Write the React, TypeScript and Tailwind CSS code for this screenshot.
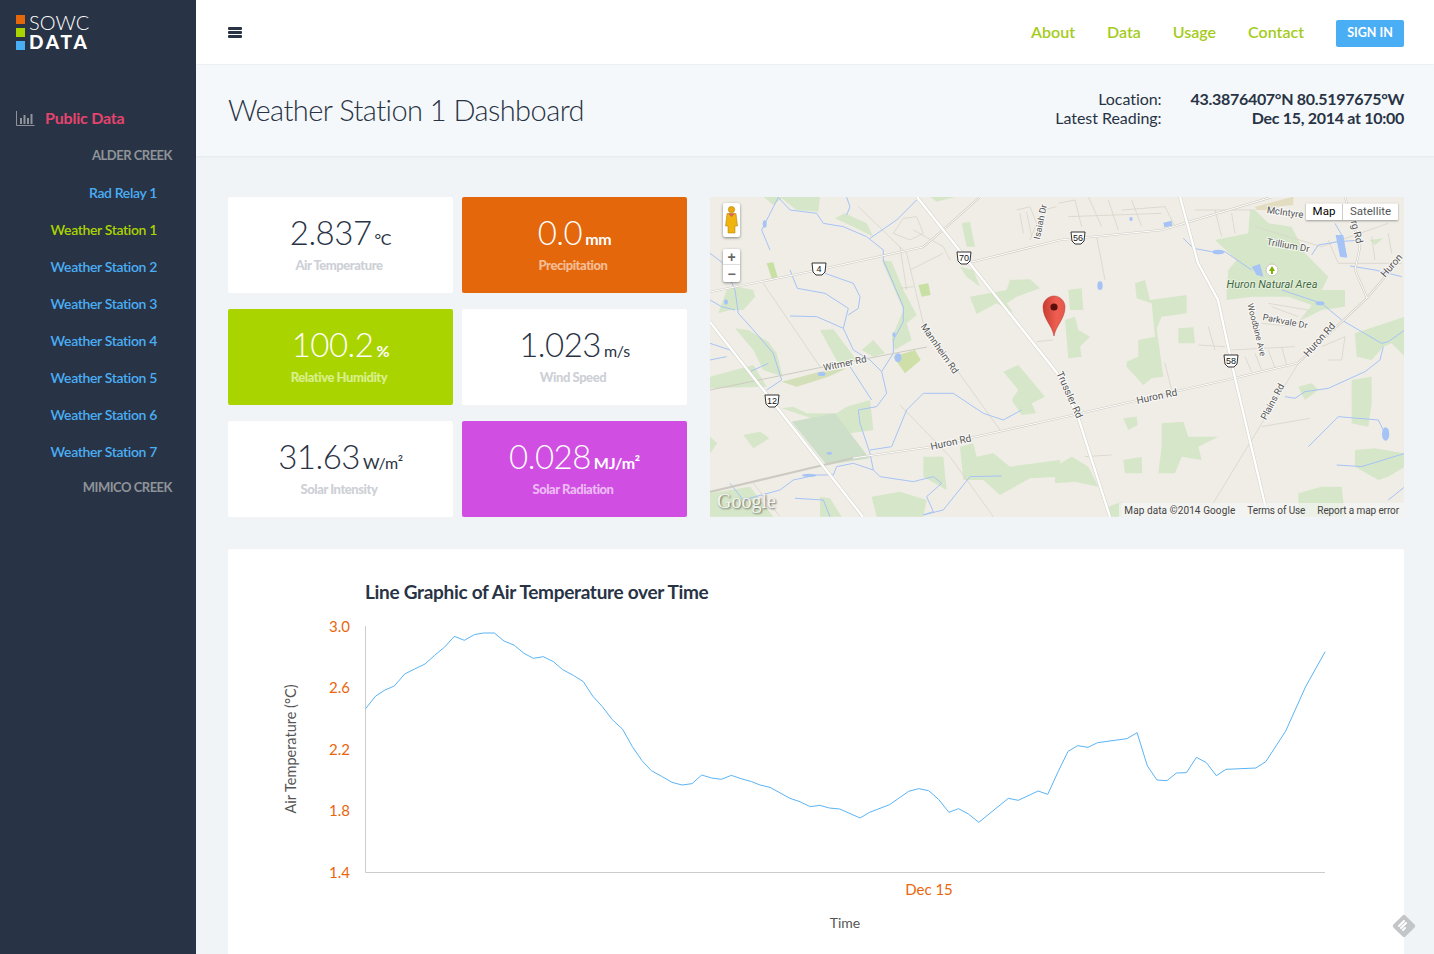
const stations = [
    "Rad Relay 1",
    "Weather Station 1",
    "Weather Station 2",
    "Weather Station 3",
    "Weather Station 4",
    "Weather Station 5",
    "Weather Station 6",
    "Weather Station 7",
];

const readings = [
    { value: "2.837", unit: "°C", label: "Air Temperature", box: "bg-white text-[#283345]", labelColor: "text-[#cdd0d6]", unitWeight: "font-normal" },
    { value: "0.0", unit: "mm", label: "Precipitation", box: "bg-[#e4670c] text-white", labelColor: "text-[#f5bd94]", unitWeight: "font-bold" },
    { value: "100.2", unit: "%", label: "Relative Humidity", box: "bg-[#aad400] text-white", labelColor: "text-[#d9f08c]", unitWeight: "font-bold" },
    { value: "1.023", unit: "m/s", label: "Wind Speed", box: "bg-white text-[#283345]", labelColor: "text-[#cdd0d6]", unitWeight: "font-normal" },
    { value: "31.63", unit: "W/m²", label: "Solar Intensity", box: "bg-white text-[#283345]", labelColor: "text-[#cdd0d6]", unitWeight: "font-normal" },
    { value: "0.028", unit: "MJ/m²", label: "Solar Radiation", box: "bg-[#d04fe2] text-white", labelColor: "text-[#eebaf5]", unitWeight: "font-bold" },
];

// traced from the reference, split in two runs
const lineLeft = [[287,416],[317,378],[345,360],[373,348],[404,312],[434,297],[465,282],[494,256],[524,231],[553,199],[583,211],[613,194],[640,189],[673,189],[702,213],[733,226],[762,250],[790,265],[820,260],[850,275],[878,299],[910,316],[940,335],[968,378],[997,410],[1027,449],[1058,478],[1087,530],[1116,572],[1144,602],[1175,619],[1206,637],[1236,645],[1266,641],[1295,615],[1325,624],[1354,628],[1384,616],[1413,626],[1445,635],[1470,645],[1500,652]];
const lineRight = [[52,685],[78,695],[105,710],[130,706],[155,714],[182,717],[235,744],[260,727],[312,704],[362,664],[388,656],[414,662],[440,688],[467,727],[492,716],[518,732],[545,757],[622,685],[648,691],[700,663],[725,673],[752,605],[778,544],[803,527],[830,532],[855,518],[932,506],[958,488],[985,588],[1010,630],[1036,632],[1061,609],[1087,608],[1113,562],[1139,578],[1165,617],[1190,598],[1268,594],[1294,575],[1346,483],[1398,350],[1449,245]];
const linePoints = [
    ...lineLeft.map(([x, y]) => `${270 + x / 3},${570 + y / 3}`),
    ...lineRight.map(([x, y]) => `${770 + x / 2.61},${570 + y / 3}`),
].join(" ");

const greensA = [
    "M160,20L330,20L325,65L260,60L215,25L190,45Z",
    "M375,85L405,70L470,100L490,140L430,110Z",
    "M515,210L545,215L580,300L620,375L590,400L605,450L555,480L545,445L580,360Z",
    "M780,320L890,300L900,270L960,268L990,295L920,320L890,340L910,370L860,340L800,372Z",
    "M750,230L790,240L810,290L770,260Z",
    "M25,370L50,300L80,290L130,300L135,320L100,360L60,360Z",
    "M330,420L370,418L440,510L385,520Z",
    "M455,480L490,450L525,490L490,500Z",
    "M75,415L115,420L175,455L200,490L218,560L160,540L130,480Z",
    "M0,560L130,525L170,590L0,595Z",
    "M215,655L250,650L290,670L380,670L410,650L480,630L490,720L420,730L350,700Z",
    "M100,735L150,725L178,745L130,775Z",
    "M0,740L22,760L0,790Z",
    "M640,800L700,800L710,900L640,860Z",
    "M750,770L790,760L800,800L850,790L900,830L1050,810L1050,860L960,865L870,915L820,870L760,870Z",
    "M880,545L925,525L1005,620L965,640L978,670L935,675L905,630L925,600Z",
    "M485,920L570,905L650,930L640,980L500,980Z",
    "M0,910L120,890L190,980L0,980Z",
    "M330,920L360,925L395,980L330,980Z",
    "M660,20L740,20L680,35Z",
    "M755,100L780,95L795,170L770,170Z",
];
const greensB = [
    "M480,150L580,130L585,60L600,60L640,100L710,110L750,190L820,260L800,300L870,300L870,350L800,360L740,390L770,345L700,320L650,320L590,320L515,330L515,300L520,240L545,210Z",
    "M40,300L80,295L85,360L45,360Z",
    "M240,280L270,270L285,330L395,315L395,370L320,380L305,415L325,560L290,565L265,585L215,530L215,515L250,500L250,450L300,440L290,340L245,325Z",
    "M370,415L415,412L420,460L370,460Z",
    "M30,390L60,380L70,420L105,440L75,470L80,500L40,505Z",
    "M205,685L245,680L248,705L220,720Z",
    "M320,700L385,695L400,740L490,740L430,770L440,810L380,800L360,850L310,850L320,770Z",
    "M205,810L260,800L262,850L210,850Z",
    "M0,830L50,800L100,830L130,890L60,875L0,880Z",
    "M730,910L800,890L860,890L870,980L730,980Z",
    "M900,430L1050,380L1050,500L1010,460L985,470L950,510L905,500Z",
    "M890,570L950,560L950,640L940,710L890,700Z",
    "M900,780L960,775L1050,790L1050,830L1000,860L970,870L900,830Z",
    "M730,590L770,580L790,600L750,630Z",
    "M160,950L200,935L200,980L165,980Z",
    "M945,150L985,145L960,165Z",
];
const riversA = [
    "M180,180L155,120L205,22L240,60L320,70L340,100L400,110L470,140L520,180L520,210L580,350L580,395L550,450L550,490L515,545L530,610L500,650L445,660L450,700L480,790L490,840L510,860L610,875L670,860L695,880L650,920L670,965L640,975L700,960L780,860L875,858",
    "M410,22L420,50L410,75",
    "M480,145L560,90L620,30",
    "M240,240L262,295L345,310L415,355L400,415L430,480L480,510L515,545",
    "M345,250L430,280L450,320L445,355L415,375",
    "M240,378L320,380L400,415",
    "M0,190L40,220L75,300L85,370L130,420L190,490L215,570L170,600",
    "M0,330L35,350L75,360",
    "M0,460L60,480L120,545L175,520",
    "M0,510L50,500",
    "M420,530L485,630",
    "M480,780L545,770L590,660L640,610L730,610L820,670L880,690L935,660",
    "M60,880L100,930L210,900L250,870L320,855L370,855L380,830L430,820L490,840",
    "M255,925L340,930L360,980",
];
const riversB = [
    "M385,145L415,175L470,185L510,185L590,240",
    "M680,300L800,340L860,390L980,460L1000,455L1050,420",
    "M985,470L975,510L930,545L820,595L750,605L720,625L690,620",
    "M760,770L850,680L970,690L995,740",
    "M845,825L920,830L1050,790",
    "M770,195L790,165L850,155L920,150",
    "M840,100L860,135L875,200",
    "M885,228L960,240L1040,260",
    "M1000,930L1050,890",
];
const streetsA = [
    "M160,280L330,530", "M445,50L590,190L640,400L870,720", "M570,645L720,800L850,980", "M130,880L210,980",
    "M550,130L580,85L620,80L640,130L600,150Z", "M570,170L590,300", "M600,240L700,190", "M610,120L700,170L720,210", "M570,295L610,290",
    "M920,60L960,50L980,100L960,150", "M930,70L940,130", "M950,65L965,140", "M1000,60L1040,50", "M980,455L1030,450",
];
const streetsB = [
    "M10,40L60,30L80,110", "M100,20L140,110", "M160,30L190,120", "M200,60L330,50L360,110", "M40,80L320,70", "M230,30L260,110",
    "M420,60L600,60", "M480,60L500,140", "M530,70L540,130", "M600,110L800,170", "M640,340L760,360L720,410L620,400",
    "M650,350L730,380", "M530,480L720,470", "M570,500L590,545", "M600,490L620,540", "M640,480L660,535", "M680,470L695,525", "M430,465L510,470",
    "M460,410L480,480", "M800,170L1000,100", "M820,150L850,220L1040,220", "M950,140L960,210", "M1000,130L1010,190", "M800,470L870,440L860,510L820,510",
    "M730,520L450,980", "M620,710L765,685", "M330,520L350,600", "M125,140L150,270", "M90,800L170,795",
];

const shields = [
    { x: 819, y: 269, label: "4" },
    { x: 964, y: 258, label: "70" },
    { x: 772, y: 401, label: "12" },
    { x: 1078, y: 238, label: "56" },
    { x: 1231, y: 361, label: "58" },
];

const mapLabels = [
    { x: 845, y: 364, r: -12, t: "Witmer Rd", size: "text-[9.5px]" },
    { x: 939, y: 349, r: 55, t: "Mannheim Rd", size: "text-[9.5px]" },
    { x: 951, y: 443, r: -12, t: "Huron Rd", size: "text-[10px]" },
    { x: 1069, y: 395, r: 66, t: "Trussler Rd", size: "text-[10px]" },
    { x: 1157, y: 397, r: -12, t: "Huron Rd", size: "text-[10px]" },
    { x: 1273, y: 402, r: -62, t: "Plains Rd", size: "text-[9.5px]" },
    { x: 1041, y: 222, r: -78, t: "Isaiah Dr", size: "text-[9px]" },
    { x: 1285, y: 213, r: 8, t: "McIntyre", size: "text-[9.5px]" },
    { x: 1288, y: 246, r: 10, t: "Trillium Dr", size: "text-[9.5px]" },
    { x: 1285, y: 322, r: 11, t: "Parkvale Dr", size: "text-[9px]" },
    { x: 1256, y: 330, r: 76, t: "Woodbine Ave", size: "text-[8.5px]" },
    { x: 1320, y: 340, r: -48, t: "Huron Rd", size: "text-[10px]" },
    { x: 1392, y: 266, r: -48, t: "Huron", size: "text-[10px]" },
    { x: 1356, y: 232, r: 76, t: "rg Rd", size: "text-[10px]" },
];

function MapCanvas() {
    return (
        <svg viewBox="710 197 694 320" className="absolute inset-0 h-full w-full">
            <rect x="710" y="197" width="694" height="320" fill="#efede6" />
            <g transform="translate(710 190) scale(0.3333)">
                {greensA.map((d) => <path key={d} d={d} fill="#d6e6c8" />)}
                <path d="M245,695L375,670L478,805L350,825Z" fill="#cddfc8" />
                <path d="M215,575L330,545L410,535L355,560L260,590Z" fill="#d3dfb8" />
                <path d="M550,500L615,480L632,510L585,550Z" fill="#cfdfa8" />
                <path d="M170,220L190,217L203,262L185,265Z" fill="#c8e0a4" />
                <path d="M625,285L655,280L662,315L635,320Z" fill="#c8e0a4" />
                {streetsA.map((d) => <path key={d} d={d} fill="none" stroke="#d9d6ca" strokeWidth="2.5" />)}
                {riversA.map((d) => <path key={d} d={d} fill="none" stroke="#a6c3f6" strokeWidth="3" />)}
                <ellipse cx="164" cy="102" rx="6" ry="11" fill="#a6c3f6" />
                <ellipse cx="48" cy="336" rx="6" ry="8" fill="#a6c3f6" />
                <ellipse cx="564" cy="503" rx="10" ry="13" fill="#a6c3f6" />
                <ellipse cx="552" cy="434" rx="5" ry="7" fill="#a6c3f6" />
                <ellipse cx="335" cy="552" rx="12" ry="6" fill="#a6c3f6" />
                <ellipse cx="298" cy="856" rx="22" ry="5" fill="#a6c3f6" />
                <ellipse cx="358" cy="790" rx="9" ry="4" fill="#a6c3f6" />
            </g>
            <g transform="translate(1055 190) scale(0.3333)">
                {greensB.map((d) => <path key={d} d={d} fill="#d6e6c8" />)}
                <path d="M600,50L715,20L715,45L665,50L635,60L605,60Z" fill="#e2ddc0" />
                {streetsB.map((d) => <path key={d} d={d} fill="none" stroke="#d9d6ca" strokeWidth="2.5" />)}
                {riversB.map((d) => <path key={d} d={d} fill="none" stroke="#a6c3f6" strokeWidth="3" />)}
                <ellipse cx="135" cy="287" rx="8" ry="13" fill="#a6c3f6" />
                <path d="M325,98L350,92L352,108L328,112Z" fill="#a6c3f6" />
                <path d="M590,230L615,222L625,260L605,255Z" fill="#a6c3f6" />
                <ellipse cx="992" cy="732" rx="11" ry="20" fill="#a6c3f6" />
                <path d="M842,135L865,135L876,203L855,200Z" fill="#a6c3f6" />
                <ellipse cx="490" cy="186" rx="18" ry="7" fill="#a6c3f6" />
                <ellipse cx="228" cy="87" rx="5" ry="6" fill="#a6c3f6" />
                <ellipse cx="795" cy="340" rx="13" ry="6" fill="#a6c3f6" />
            </g>
            {/* minor roads, double line */}
            <g fill="none" stroke="#cdcbc1" strokeWidth="2.2">
                <polyline points="710,292 818,270 923,247 943,230 980,197" />
                <polyline points="972,262 1060,240 1162,230 1272,197" />
                <polyline points="710,390 823,367 927,347" strokeWidth="1" />
                <polyline points="710,492 853,458 930,447 1060,418 1235,378 1298,363 1367,298 1402,257" />
                <polyline points="1345,197 1360,247 1355,270 1367,298" />
            </g>
            <g fill="none" stroke="#ffffff" strokeWidth="1">
                <polyline points="710,292 818,270 923,247 943,230 980,197" />
                <polyline points="972,262 1060,240 1162,230 1272,197" />
                <polyline points="853,458 930,447 1060,418 1235,378 1298,363 1367,298 1402,257" />
                <polyline points="1345,197 1360,247 1355,270 1367,298" />
            </g>
            {/* highways */}
            <g fill="none" stroke="#d3d1c8" strokeWidth="3.4">
                <polyline points="917,197 1057,373 1078,417 1110,517" />
                <polyline points="710,322 863,517" />
                <polyline points="1180,197 1198,263 1218,300 1235,378 1268,517" />
            </g>
            <g fill="none" stroke="#ffffff" strokeWidth="2.4">
                <polyline points="917,197 1057,373 1078,417 1110,517" />
                <polyline points="710,322 863,517" />
                <polyline points="1180,197 1198,263 1218,300 1235,378 1268,517" />
            </g>
            {shields.map((s) => (
                <g key={s.label} transform={`translate(${s.x} ${s.y})`}>
                    <path d="M-7,-6H7L6,3L3,6H-3L-6,3Z" fill="#ffffff" stroke="#333333" strokeWidth="1" />
                    <text x="0" y="3" textAnchor="middle" className="font-['Liberation_Sans',sans-serif] text-[9px]" fill="#111111">{s.label}</text>
                </g>
            ))}
            {mapLabels.map((l) => (
                <text
                    key={l.t + l.x}
                    transform={`translate(${l.x} ${l.y}) rotate(${l.r})`}
                    textAnchor="middle"
                    dominantBaseline="middle"
                    fill="#555555"
                    stroke="#ffffff"
                    strokeWidth="2"
                    paintOrder="stroke"
                    strokeOpacity="0.7"
                    className={`font-['Roboto',sans-serif] ${l.size}`}
                >
                    {l.t}
                </text>
            ))}
            <text x="1272" y="285" textAnchor="middle" dominantBaseline="middle" fill="#3f6a3f" stroke="#ffffff" strokeOpacity="0.5" strokeWidth="1.5" paintOrder="stroke" className="font-['Roboto',sans-serif] text-[11px] italic">Huron Natural Area</text>
            <circle cx="1272" cy="270" r="6" fill="#ffffff" stroke="#c8c8c0" />
            <path d="M1272,266L1275,271H1273V274H1271V271H1269Z" fill="#7fb100" />
            {/* marker */}
            <defs>
                <linearGradient id="pin" x1="0" x2="1" y1="0" y2="0">
                    <stop offset="0" stopColor="#c93a30" />
                    <stop offset="0.6" stopColor="#ee5f52" />
                    <stop offset="1" stopColor="#e8564a" />
                </linearGradient>
            </defs>
            <path d="M1054,336C1052,325 1043,319 1043,307C1043,301 1048,296 1054,296C1060,296 1065,301 1065,307C1065,319 1056,325 1054,336Z" fill="url(#pin)" stroke="#b5362c" strokeWidth="0.5" />
            <circle cx="1054" cy="307" r="3.6" fill="#5a0f0a" />
        </svg>
    );
}

function MapPanel() {
    return (
        <div className="relative h-[320px] flex-1 overflow-hidden">
            <MapCanvas />
            <div className="absolute left-[13px] top-[6px] flex h-[34px] w-[17px] items-center justify-center rounded-[2px] bg-white shadow-[0_1px_3px_rgba(0,0,0,0.45)]">
                <svg width="13" height="28" viewBox="0 0 13 28">
                    <circle cx="6.5" cy="3.6" r="3.2" fill="#e8a90c" stroke="#a87a05" strokeWidth="0.5" />
                    <path d="M2,7.5H11L12.5,20H10V27H3V20H0.5Z" fill="#f0b40f" stroke="#a87a05" strokeWidth="0.5" />
                    <path d="M3,7.5H10L6.5,11Z" fill="#d9655a" />
                </svg>
            </div>
            <div className="absolute left-[13px] top-[52px] flex h-[33px] w-[17px] flex-col rounded-[2px] bg-white text-[#666666] shadow-[0_1px_3px_rgba(0,0,0,0.45)]">
                <div className="flex h-[16px] items-center justify-center border-b border-[#dddddd] font-['Liberation_Sans',sans-serif] text-[14px] font-bold leading-none">+</div>
                <div className="flex h-[17px] items-center justify-center font-['Liberation_Sans',sans-serif] text-[14px] font-bold leading-none">−</div>
            </div>
            <div className="absolute left-[596px] top-[6px] flex h-[17px] pt-[1px] font-['Roboto',sans-serif] text-[11.5px] shadow-[0_1px_2px_rgba(0,0,0,0.35)]">
                <div className="flex w-[37px] items-center justify-center rounded-l-[2px] border-r border-[#cccccc] bg-white text-black">Map</div>
                <div className="flex w-[55px] items-center justify-center rounded-r-[2px] bg-white text-[#565656]">Satellite</div>
            </div>
            <div className="absolute bottom-[6px] left-[7px] font-['Liberation_Serif',serif] text-[20px] leading-none text-[#f4f4f0] [text-shadow:1px_1px_2px_rgba(0,0,0,0.55)]">Google</div>
            <div className="absolute bottom-0 right-0 flex h-[14px] items-center font-['Roboto',sans-serif] text-[10px] tracking-[-0.1px] text-[#444444]">
                <span className="flex h-full items-center bg-[rgba(245,245,245,0.7)] pl-[5px] pr-[6px] tracking-[0.1px]">Map data ©2014 Google</span>
                <span className="flex h-full items-center bg-[rgba(245,245,245,0.7)] px-[6px]">Terms of Use</span>
                <span className="flex h-full items-center bg-[rgba(245,245,245,0.7)] pl-[6px] pr-[5px]">Report a map error</span>
            </div>
        </div>
    );
}

function Chart() {
    const yTicks = [
        { y: 628, t: "3.0" },
        { y: 689, t: "2.6" },
        { y: 751, t: "2.2" },
        { y: 812, t: "1.8" },
        { y: 874, t: "1.4" },
    ];
    return (
        <svg viewBox="228 610 1176 344" className="mt-[7px] block h-[344px] w-full font-[Lato,sans-serif]">
            <path d="M365.5,626V872.5H1325" fill="none" stroke="#cccccc" strokeWidth="1" />
            <polyline points={linePoints} fill="none" stroke="#5ab4f5" strokeWidth="1" />
            {yTicks.map((tick) => (
                <text key={tick.t} x="350" y={tick.y} textAnchor="end" dominantBaseline="middle" fill="#e9660c" className="text-[15px]">{tick.t}</text>
            ))}
            <text x="929" y="891" textAnchor="middle" dominantBaseline="middle" fill="#e9660c" className="text-[15px]">Dec 15</text>
            <text x="845" y="924" textAnchor="middle" dominantBaseline="middle" fill="#555555" className="text-[14px]">Time</text>
            <text transform="translate(292 749) rotate(-90)" textAnchor="middle" dominantBaseline="middle" fill="#555555" className="text-[14.5px]">Air Temperature (°C)</text>
        </svg>
    );
}

export default function App() {
    return (
        <div className="relative flex h-[954px] w-full overflow-hidden bg-[#f0f4f7] font-[Lato,sans-serif] text-[#283345]">
            <aside className="w-[196px] shrink-0 bg-[#283345]">
                <div className="flex gap-[3px] pl-[16px] pt-[15px]">
                    <div className="flex flex-col gap-[4px]">
                        <span className="h-[9px] w-[9px] bg-[#e4670c]" />
                        <span className="h-[9px] w-[9px] bg-[#aad400]" />
                        <span className="h-[9px] w-[9px] bg-[#4aaef5]" />
                    </div>
                    <div className="flex flex-col pl-[1px] text-white">
                        <span className="mt-[-1px] text-[20px] font-light leading-[17px] tracking-[0px]">SOWC</span>
                        <span className="mt-[1px] text-[19px] font-black leading-[20px] tracking-[2.8px]">DATA</span>
                    </div>
                </div>
                <div className="mt-[56px] flex items-center pl-[16px]">
                    <svg width="19" height="15" viewBox="0 0 19 15" fill="none" className="shrink-0">
                        <path d="M0.5,0V14.5H18.5" stroke="#8f9499" strokeWidth="1" />
                        <path d="M4,7h2v6h-2zM7.5,4h2v9h-2zM11,7h2v6h-2zM14.5,3h2v10h-2z" fill="#8f9499" />
                    </svg>
                    <span className="ml-[10px] text-[16px] font-bold leading-[20px] tracking-[-0.2px] text-[#e5446d]">Public Data</span>
                </div>
                <div className="mt-[19px] pr-[24px] text-right text-[13px] font-bold leading-[16px] tracking-[-0.5px] text-[#8f9499]">ALDER CREEK</div>
                <nav className="mt-[11px] flex flex-col pr-[39px] text-right text-[14px] font-semibold tracking-[-0.35px] text-[#4aaef5]">
                    {stations.map((station) => (
                        <a key={station} className={`flex h-[37px] items-center justify-end ${station === "Weather Station 1" ? "text-[#aad400]" : ""}`}>
                            {station}
                        </a>
                    ))}
                </nav>
                <div className="mt-[9px] pr-[24px] text-right text-[13px] font-bold leading-[16px] tracking-[-0.5px] text-[#8f9499]">MIMICO CREEK</div>
            </aside>

            <main className="flex min-w-0 flex-1 flex-col">
                <header className="flex h-[65px] shrink-0 items-center justify-between border-b border-[#eef1f3] bg-white pl-[32px] pr-[30px]">
                    <div className="flex w-[14px] flex-col gap-[1px]">
                        <span className="h-[3px] rounded-[1px] bg-[#283345]" />
                        <span className="h-[3px] rounded-[1px] bg-[#283345]" />
                        <span className="h-[3px] rounded-[1px] bg-[#283345]" />
                    </div>
                    <div className="flex items-center text-[16px] font-semibold tracking-[0px] text-[#a4cb1a]">
                        <a>About</a>
                        <a className="ml-[32px]">Data</a>
                        <a className="ml-[32px]">Usage</a>
                        <a className="ml-[32px]">Contact</a>
                        <a className="ml-[32px] mt-[2px] flex h-[27px] w-[68px] items-center justify-center rounded-[2px] bg-[#4aaef5] pt-[1px] text-[12.5px] font-bold text-white">SIGN IN</a>
                    </div>
                </header>

                <div className="flex h-[91px] shrink-0 items-center justify-between bg-[#f5f8fa] pl-[32px] pr-[30px] shadow-[0_1px_2px_rgba(40,51,69,0.06)]">
                    <h1 className="mb-[2px] text-[29px] font-light tracking-[-0.55px]">Weather Station 1 Dashboard</h1>
                    <div className="mb-[6px] flex gap-[29px] text-right text-[16px] leading-[19px] tracking-[-0.05px]">
                        <div>
                            <div>Location:</div>
                            <div>Latest Reading:</div>
                        </div>
                        <div className="font-bold tracking-[-0.3px]">
                            <div>43.3876407°N 80.5197675°W</div>
                            <div>Dec 15, 2014 at 10:00</div>
                        </div>
                    </div>
                </div>

                <div className="flex flex-col gap-[32px] pl-[32px] pr-[30px] pt-[41px]">
                    <div className="flex gap-[23px]">
                        <div className="grid w-[459px] grid-cols-[225px_225px] gap-x-[9px] gap-y-[16px]">
                            {readings.map((reading) => (
                                <div key={reading.label} className={`flex h-[96px] flex-col items-center rounded-[2px] pt-[12px] ${reading.box}`}>
                                    <div className="flex h-[46px] items-baseline">
                                        <span className="text-[33px] font-light leading-[46px] tracking-[-0.5px]">{reading.value}</span>
                                        <span className={`ml-[3px] text-[16px] tracking-[-0.3px] ${reading.unitWeight}`}>{reading.unit}</span>
                                    </div>
                                    <div className={`mr-[3px] mt-[1px] text-[13px] font-black leading-[18px] tracking-[-0.45px] ${reading.labelColor}`}>{reading.label}</div>
                                </div>
                            ))}
                        </div>
                        <MapPanel />
                    </div>

                    <section className="rounded-t-[2px] bg-white">
                        <h2 className="pl-[137px] pt-[31px] text-[19px] font-bold leading-[23px] tracking-[-0.3px]">Line Graphic of Air Temperature over Time</h2>
                        <Chart />
                    </section>
                </div>
            </main>

            <svg width="26" height="26" viewBox="0 0 26 26" className="absolute left-[1391px] top-[913px]">
                <rect x="4.5" y="4.5" width="17" height="17" rx="2" transform="rotate(45 13 13)" fill="#c3c6c8" />
                <path d="M8,13L13,8M10,15L15,10M12,17L14,15" stroke="#ffffff" strokeWidth="2" strokeLinecap="round" />
            </svg>
        </div>
    );
}
